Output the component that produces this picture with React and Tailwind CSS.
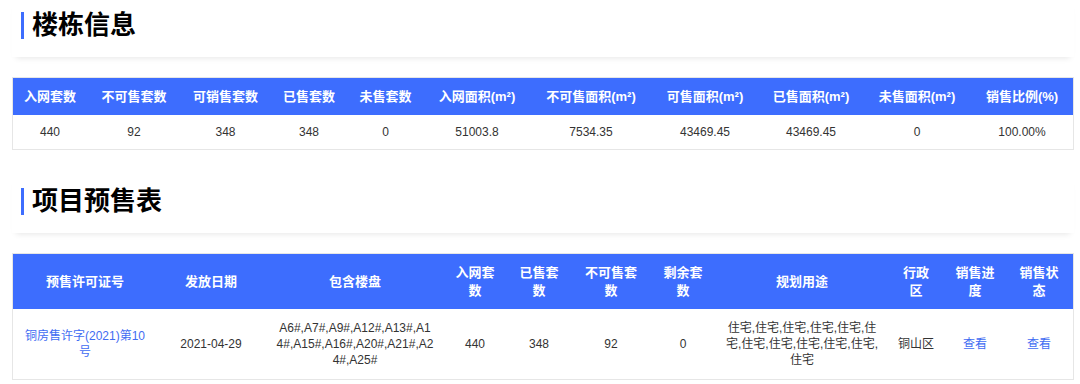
const FONT = "font-['Liberation_Sans','Noto_Sans_CJK_SC',sans-serif]"

const buildingCols = [74, 94, 89, 78, 75, 108, 120, 108, 104, 108, 102]
const buildingHead = ['入网套数', '不可售套数', '可销售套数', '已售套数', '未售套数', '入网面积(m²)', '不可售面积(m²)', '可售面积(m²)', '已售面积(m²)', '未售面积(m²)', '销售比例(%)']
const buildingRow = ['440', '92', '348', '348', '0', '51003.8', '7534.35', '43469.45', '43469.45', '0', '100.00%']

const presaleCols = [144, 108, 180, 60, 68, 76, 68, 170, 58, 60, 68]

function SectionTitle({ children }) {
  return (
    <div className="h-[57px] pt-[12px] pl-[9px] bg-white shadow-[0_5px_6px_-4px_rgba(0,0,0,0.10)]">
      <div className="flex items-center h-[27px]">
        <span className="w-[3px] h-[27px] bg-[#3d6dfe]" />
        <h2 className="ml-[8px] text-[26px] leading-[27px] font-bold text-black">{children}</h2>
      </div>
    </div>
  )
}

export default function App() {
  return (
    <div className={`min-h-screen bg-white pl-[12px] pr-[6px] ${FONT}`}>
      {/* 楼栋信息 */}
      <SectionTitle>楼栋信息</SectionTitle>
      <div className="mt-[20px] border border-[#e6e6e6]">
        <table className="w-full table-fixed border-collapse">
          <colgroup>
            {buildingCols.map((w, i) => <col key={i} style={{ width: w }} />)}
          </colgroup>
          <thead>
            <tr className="h-[37px] bg-[#3d6dfe]">
              {buildingHead.map((h) => (
                <th key={h} className="p-0 text-[13px] font-bold text-white text-center whitespace-nowrap">{h}</th>
              ))}
            </tr>
          </thead>
          <tbody>
            <tr className="h-[34px]">
              {buildingRow.map((v, i) => (
                <td key={i} className="p-0 text-[12px] text-[#333] text-center">{v}</td>
              ))}
            </tr>
          </tbody>
        </table>
      </div>

      {/* 项目预售表 */}
      <div className="mt-[26px]">
        <SectionTitle>项目预售表</SectionTitle>
      </div>
      <div className="mt-[20px] border border-[#e6e6e6]">
        <table className="w-full table-fixed border-collapse">
          <colgroup>
            {presaleCols.map((w, i) => <col key={i} style={{ width: w }} />)}
          </colgroup>
          <thead>
            <tr className="h-[55px] bg-[#3d6dfe] text-[13px] leading-[18px] font-bold text-white text-center">
              <th className="px-[10px]">预售许可证号</th>
              <th className="px-[10px]">发放日期</th>
              <th className="px-[10px]">包含楼盘</th>
              <th className="px-[10px]">入网套数</th>
              <th className="px-[10px]">已售套数</th>
              <th className="px-[10px]">不可售套数</th>
              <th className="px-[10px]">剩余套数</th>
              <th className="px-[7px]">规划用途</th>
              <th className="px-[10px]">行政区</th>
              <th className="px-[10px]">销售进度</th>
              <th className="px-[10px]">销售状态</th>
            </tr>
          </thead>
          <tbody>
            <tr className="h-[70px] text-[12px] leading-[16px] text-[#333] text-center">
              <td className="px-[10px] text-[#3f6cf2]">铜房售许字(2021)第10号</td>
              <td className="px-[10px]">2021-04-29</td>
              <td className="px-[11.25px] break-all">A6#,A7#,A9#,A12#,A13#,A14#,A15#,A16#,A20#,A21#,A24#,A25#</td>
              <td className="px-[10px]">440</td>
              <td className="px-[10px]">348</td>
              <td className="px-[10px]">92</td>
              <td className="px-[10px]">0</td>
              <td className="px-[7px]">住宅,住宅,住宅,住宅,住宅,住宅,住宅,住宅,住宅,住宅,住宅,住宅</td>
              <td className="px-[10px]">铜山区</td>
              <td className="px-[10px] text-[#3f6cf2] cursor-pointer">查看</td>
              <td className="px-[10px] text-[#3f6cf2] cursor-pointer">查看</td>
            </tr>
          </tbody>
        </table>
      </div>
    </div>
  )
}
